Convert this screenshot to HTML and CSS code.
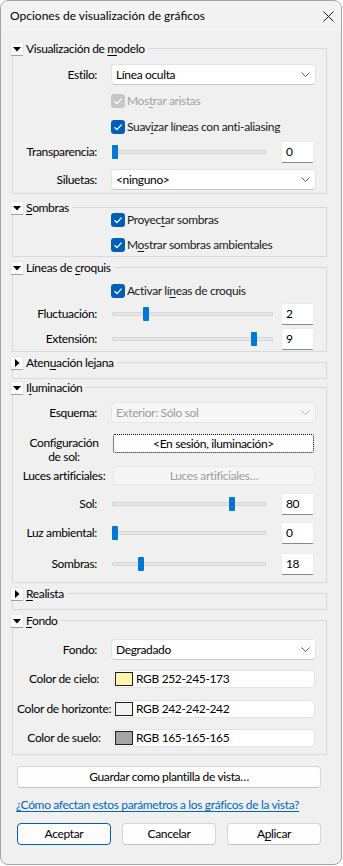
FILE: index.html
```html
<!doctype html>
<html lang="es">
<head>
  <meta charset="UTF-8">
  <meta name="viewport" content="width=device-width, initial-scale=1.0">
  <title>Opciones de visualización de gráficos</title>
  <link rel="stylesheet" href="styles.css">
</head>
<body>
<div class="dialog">
  <div class="titlebar">
    <span class="title">Opciones de visualización de gráficos</span>
    <svg class="close" width="11" height="11" viewBox="0 0 11 11"><path d="M0.5 0.5L10.5 10.5M10.5 0.5L0.5 10.5" stroke="#1b1b1b" stroke-width="1" fill="none"/></svg>
  </div>
  <div class="content">

    <!-- Visualizacion de modelo -->
    <section class="group g1">
      <div class="ghead">
        <span class="toggle"><svg width="8" height="5" viewBox="0 0 8 5"><path d="M0 0H8L4 4.5Z" fill="#000"/></svg></span>
        <span class="gtitle">Visualización de <u>m</u>odelo</span>
      </div>
      <div class="row r-estilo">
        <span class="lbl">Estilo:</span>
        <div class="select">Línea oculta<svg class="chev" width="9" height="5" viewBox="0 0 9 5"><path d="M0.5 0.5L4.5 4.5L8.5 0.5" stroke="#5f5f5f" fill="none"/></svg></div>
      </div>
      <div class="row check r-aristas">
        <span class="cb off"><svg width="14" height="14" viewBox="0 0 14 14"><path d="M3.5 7.2L6 9.6L10.5 4.6" stroke="#fff" stroke-width="1.3" fill="none"/></svg></span>
        <span class="dis">Mos<u>t</u>rar aristas</span>
      </div>
      <div class="row check r-suavizar">
        <span class="cb"><svg width="14" height="14" viewBox="0 0 14 14"><path d="M3.5 7.2L6 9.6L10.5 4.6" stroke="#fff" stroke-width="1.3" fill="none"/></svg></span>
        <span>Suav<u>i</u>zar líneas con anti-aliasing</span>
      </div>
      <div class="row r-transp">
        <span class="lbl">Transparencia:</span>
        <div class="slider"><div class="track"></div><span class="thumb" style="left: 1px"></span></div>
        <div class="num">0</div>
      </div>
      <div class="row r-siluetas">
        <span class="lbl">Siluetas:</span>
        <div class="select">&lt;ninguno&gt;<svg class="chev" width="9" height="5" viewBox="0 0 9 5"><path d="M0.5 0.5L4.5 4.5L8.5 0.5" stroke="#5f5f5f" fill="none"/></svg></div>
      </div>
    </section>

    <!-- Sombras -->
    <section class="group g2">
      <div class="ghead">
        <span class="toggle"><svg width="8" height="5" viewBox="0 0 8 5"><path d="M0 0H8L4 4.5Z" fill="#000"/></svg></span>
        <span class="gtitle"><u>S</u>ombras</span>
      </div>
      <div class="row check r-proyectar">
        <span class="cb"><svg width="14" height="14" viewBox="0 0 14 14"><path d="M3.5 7.2L6 9.6L10.5 4.6" stroke="#fff" stroke-width="1.3" fill="none"/></svg></span>
        <span>Proyec<u>t</u>ar sombras</span>
      </div>
      <div class="row check r-ambient">
        <span class="cb"><svg width="14" height="14" viewBox="0 0 14 14"><path d="M3.5 7.2L6 9.6L10.5 4.6" stroke="#fff" stroke-width="1.3" fill="none"/></svg></span>
        <span>M<u>o</u>strar sombras ambientales</span>
      </div>
    </section>

    <!-- Lineas de croquis -->
    <section class="group g3">
      <div class="ghead">
        <span class="toggle"><svg width="8" height="5" viewBox="0 0 8 5"><path d="M0 0H8L4 4.5Z" fill="#000"/></svg></span>
        <span class="gtitle">Líneas de <u>c</u>roquis</span>
      </div>
      <div class="row check r-activar">
        <span class="cb"><svg width="14" height="14" viewBox="0 0 14 14"><path d="M3.5 7.2L6 9.6L10.5 4.6" stroke="#fff" stroke-width="1.3" fill="none"/></svg></span>
        <span>Activar lí<u>n</u>eas de croquis</span>
      </div>
      <div class="row r-fluct">
        <span class="lbl">Fluctuación:</span>
        <div class="slider wide"><div class="track"></div><span class="thumb" style="left: 32px"></span></div>
        <div class="num">2</div>
      </div>
      <div class="row r-ext">
        <span class="lbl">Extensión:</span>
        <div class="slider wide"><div class="track"></div><span class="thumb" style="left: 140px"></span></div>
        <div class="num">9</div>
      </div>
    </section>

    <!-- Atenuacion lejana -->
    <section class="group collapsed g4">
      <div class="ghead">
        <span class="toggle"><svg width="5" height="8" viewBox="0 0 5 8"><path d="M0 0V8L4.5 4Z" fill="#000"/></svg></span>
        <span class="gtitle">Aten<u>u</u>ación lejana</span>
      </div>
    </section>

    <!-- Iluminacion -->
    <section class="group g5">
      <div class="ghead">
        <span class="toggle"><svg width="8" height="5" viewBox="0 0 8 5"><path d="M0 0H8L4 4.5Z" fill="#000"/></svg></span>
        <span class="gtitle">I<u>l</u>uminación</span>
      </div>
      <div class="row r-esquema">
        <span class="lbl">Esquema:</span>
        <div class="select disabled">Exterior: Sólo sol<svg class="chev" width="9" height="5" viewBox="0 0 9 5"><path d="M0.5 0.5L4.5 4.5L8.5 0.5" stroke="#b5b5b5" fill="none"/></svg></div>
      </div>
      <div class="row top r-config">
        <span class="lbl c two">Configuración<br>de sol:</span>
        <div class="btn focus">&lt;En sesión, iluminación&gt;</div>
      </div>
      <div class="row r-luces">
        <span class="lbl c">Luces artificiales:</span>
        <div class="btn off">Luces artificiales…</div>
      </div>
      <div class="row r-sol">
        <span class="lbl">Sol:</span>
        <div class="slider"><div class="track"></div><span class="thumb" style="left: 118px"></span></div>
        <div class="num">80</div>
      </div>
      <div class="row r-luz">
        <span class="lbl">Luz ambiental:</span>
        <div class="slider"><div class="track"></div><span class="thumb" style="left: 1px"></span></div>
        <div class="num">0</div>
      </div>
      <div class="row r-sombras">
        <span class="lbl">Sombras:</span>
        <div class="slider"><div class="track"></div><span class="thumb" style="left: 27px"></span></div>
        <div class="num">18</div>
      </div>
    </section>

    <!-- Realista -->
    <section class="group collapsed g6">
      <div class="ghead">
        <span class="toggle"><svg width="5" height="8" viewBox="0 0 5 8"><path d="M0 0V8L4.5 4Z" fill="#000"/></svg></span>
        <span class="gtitle"><u>R</u>ealista</span>
      </div>
    </section>

    <!-- Fondo -->
    <section class="group g7">
      <div class="ghead">
        <span class="toggle"><svg width="8" height="5" viewBox="0 0 8 5"><path d="M0 0H8L4 4.5Z" fill="#000"/></svg></span>
        <span class="gtitle"><u>F</u>ondo</span>
      </div>
      <div class="row r-fondo">
        <span class="lbl">Fondo:</span>
        <div class="select">Degradado<svg class="chev" width="9" height="5" viewBox="0 0 9 5"><path d="M0.5 0.5L4.5 4.5L8.5 0.5" stroke="#5f5f5f" fill="none"/></svg></div>
      </div>
      <div class="row r-cielo">
        <span class="lbl c">Color de cielo:</span>
        <div class="color"><span class="swatch" style="background: rgb(252,245,173)"></span>RGB 252-245-173</div>
      </div>
      <div class="row r-horiz">
        <span class="lbl c">Color de horizonte:</span>
        <div class="color"><span class="swatch" style="background: rgb(242,242,242)"></span>RGB 242-242-242</div>
      </div>
      <div class="row r-suelo">
        <span class="lbl c">Color de suelo:</span>
        <div class="color"><span class="swatch" style="background: rgb(165,165,165)"></span>RGB 165-165-165</div>
      </div>
    </section>

    <div class="btn wide save">Guardar como plantilla de vista…</div>
    <a class="help" href="#">¿Cómo afectan estos parámetros a los gráficos de la vista?</a>
    <div class="actions">
      <div class="btn default">Aceptar</div>
      <div class="btn">Cancelar</div>
      <div class="btn">A<u>p</u>licar</div>
    </div>
  </div>
</div>
</body>
</html>
```

FILE: styles.css
```css
html, body { margin: 0; padding: 0; background: #fff; }
* { box-sizing: border-box; }
body { font-family: Lato, "Noto Sans", sans-serif; font-size: 12px; letter-spacing: -0.35px; color: #1a1a1a; line-height: 16px; }
u { text-underline-offset: 2px; }

.dialog { width: 342px; height: 865px; border: 1px solid #a4a4a4; border-radius: 8px; background: #f0f0f0; overflow: hidden; }
.titlebar { height: 30px; background: #f3f3f3; display: flex; align-items: center; justify-content: space-between; padding: 0 7px 0 9px; }
.title { color: #000; letter-spacing: 0; }
.close { display: block; }

.content { padding-left: 11px; }

/* group boxes */
.group { width: 315px; border: 1px solid #d9d9d9; }
.ghead { display: flex; align-items: center; height: 14px; margin: -7px 0 -7px -3px; }
.toggle { width: 14px; height: 14px; flex: none; display: flex; align-items: center; justify-content: center; background: #fbfbfb; border: 1px solid #e6e6e6; border-bottom-color: #a0a0a0; border-radius: 2px; }
.gtitle { background: #f0f0f0; padding: 0 3px 0 2px; line-height: 14px; color: #000; }
.group.collapsed { height: 17px; }
.g1 { margin-top: 17px; padding-bottom: 3px; }
.g2 { margin-top: 13px; padding-bottom: 4px; }
.g3 { margin-top: 10px; padding-bottom: 1px; }
.g4 { margin-top: 10px; }
.g5 { margin-top: 8px; padding-bottom: 7px; }
.g6 { margin-top: 10px; height: 16px; }
.g7 { margin-top: 10px; padding-bottom: 7px; }

/* rows */
.row { display: flex; align-items: center; }
.row.top { align-items: flex-start; }
.row.check { height: 14px; padding-left: 98px; }
.lbl { width: 98px; flex: none; padding-right: 14px; text-align: right; color: #000; white-space: nowrap; }
.lbl.c { padding: 0 0 0 2px; width: 100px; text-align: center; }
.lbl.two { line-height: 14px; margin-top: 2px; white-space: normal; }
.dis { color: #a3a3a3; }

.r-estilo { margin-top: 15px; }
.r-aristas { margin-top: 9px; }
.r-suavizar { margin-top: 12px; }
.r-transp { margin-top: 7px; }
.r-siluetas { margin-top: 6px; }
.r-proyectar { margin-top: 5px; }
.r-ambient { margin-top: 11px; }
.r-activar { margin-top: 16px; }
.r-fluct { margin-top: 5px; }
.r-ext { margin-top: 3px; }
.r-esquema { margin-top: 14px; }
.r-config { margin-top: 11px; }
.r-luces { margin-top: 2px; }
.r-sol { margin-top: 8px; }
.r-luz { margin-top: 7px; }
.r-sombras { margin-top: 9px; }
.r-fondo { margin-top: 18px; }
.r-cielo { margin-top: 10px; }
.r-horiz { margin-top: 12px; }
.r-suelo { margin-top: 11px; }

/* checkbox */
.cb { width: 14px; height: 14px; flex: none; border-radius: 3px; background: #005fb8; margin-right: 2px; }
.cb svg { display: block; }
.cb.off { background: #c6c6c6; }

/* combo */
.select { width: 205px; height: 21px; display: flex; align-items: center; justify-content: space-between; padding: 0 5px 0 4px; background: #fff; border: 1px solid #e3e3e3; border-bottom-color: #c8c8c8; border-radius: 4px; color: #000; }
.select.disabled { background: #f6f6f6; border-color: #e6e6e6; color: #9d9d9d; }
.chev { display: block; }

/* slider + number */
.slider { position: relative; width: 170px; height: 14px; flex: none; }
.track { margin: 5px 0 0 1px; width: 154px; height: 4px; background: #e6e6e6; border: 1px solid #d7d7d7; }
.slider.wide .track { width: 161px; }
.thumb { position: absolute; top: 0; width: 6px; height: 14px; background: #0078d4; border-radius: 1px; }
.num { width: 33px; height: 22px; padding-left: 4px; line-height: 20px; background: #fff; border: 1px solid #ececec; border-bottom-color: #8a8a8a; border-radius: 2px; color: #000; }

/* buttons */
.btn { display: flex; align-items: center; justify-content: center; height: 22px; background: #fdfdfd; border: 1px solid #d6d6d6; border-bottom-color: #c4c4c4; border-radius: 4px; color: #000; }
.btn.focus { width: 201px; height: 19px; border: 1px dotted #000; border-radius: 2px; background: #fdfdfd; }
.btn.off { width: 202px; height: 19px; background: #f5f5f5; border-color: #e7e7e7; color: #9d9d9d; }
.btn.default { border-color: #005fb8; }

/* color fields */
.color { width: 202px; height: 18px; display: flex; align-items: center; padding-left: 1px; background: #fff; border: 1px solid #e3e3e3; border-radius: 4px; color: #000; }
.swatch { width: 18px; height: 14px; margin-right: 3px; border: 1px solid #1f1f1f; }

.save { width: 304px; margin: 11px 0 0 5px; }
.help { display: block; margin: 10px 0 0 4px; line-height: 14px; color: #0067c0; text-decoration: underline; text-underline-offset: 2px; }
.actions { display: flex; justify-content: space-between; width: 304px; margin: 11px 0 0 5px; }
.actions .btn { width: 94px; }
```
